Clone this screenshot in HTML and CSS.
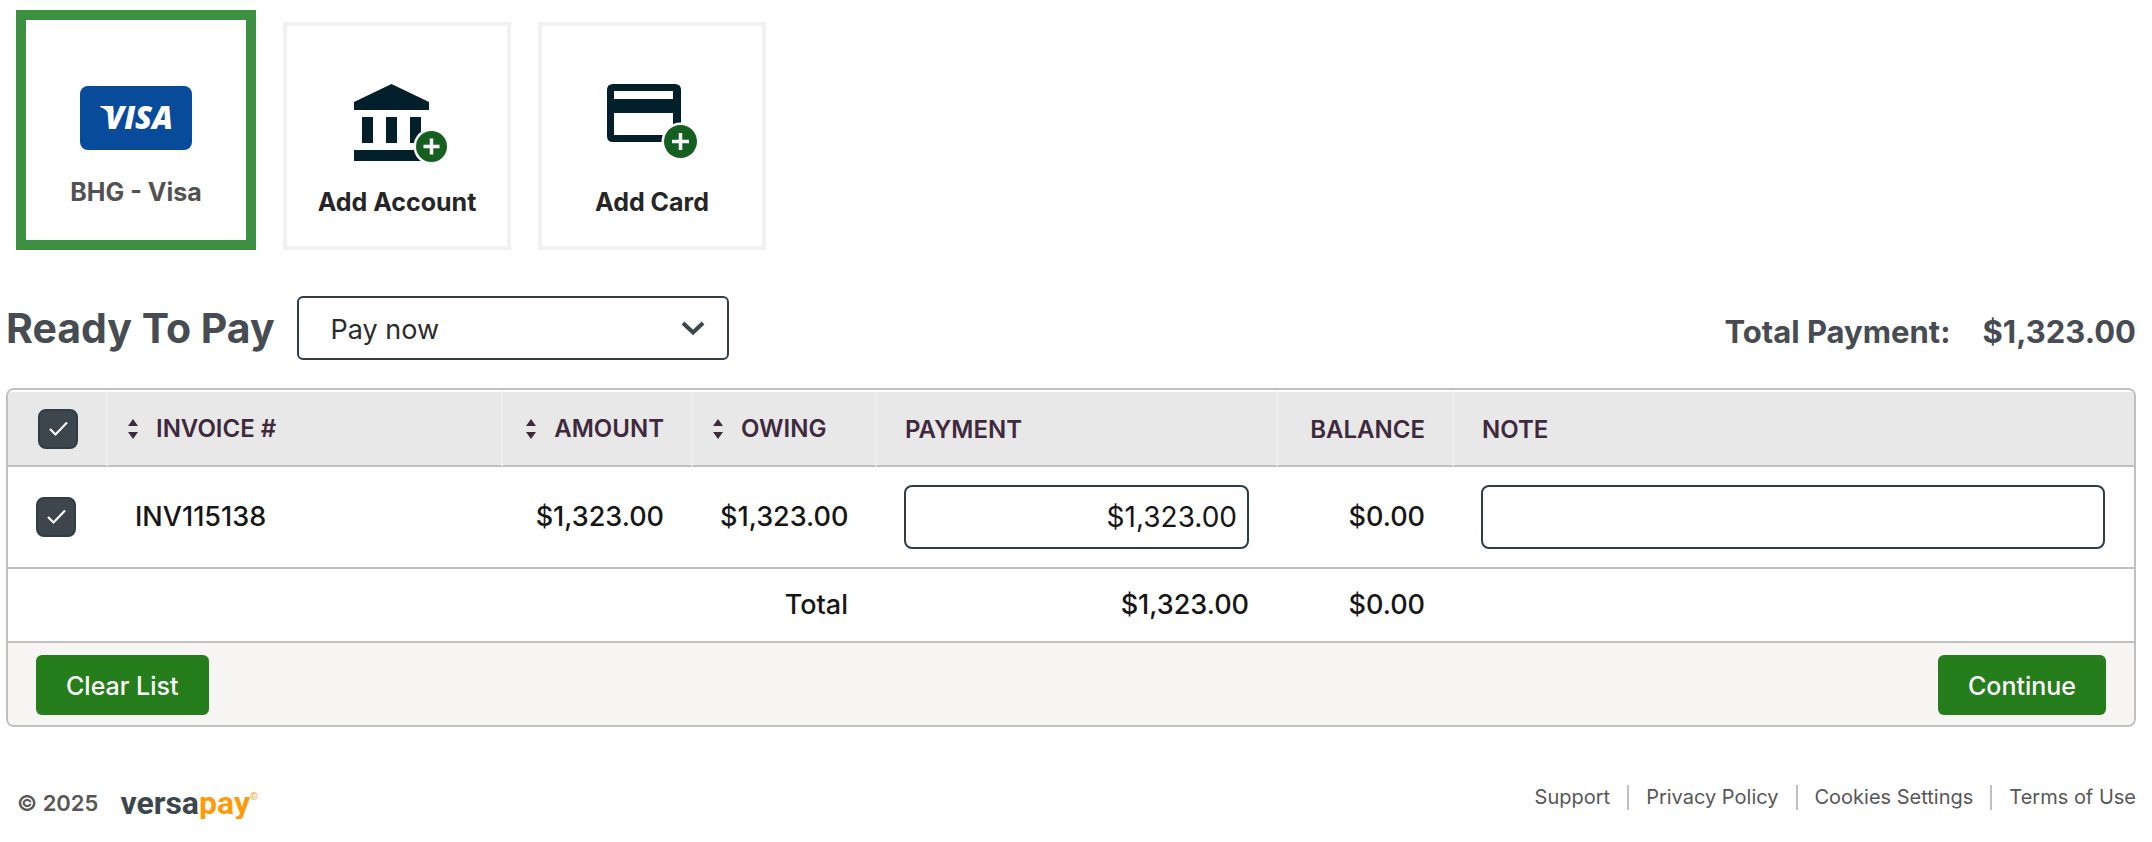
FILE: index.html
```html
<!DOCTYPE html>
<html lang="en">
<head>
<meta charset="utf-8">
<meta name="viewport" content="width=device-width, initial-scale=1">
<title>Ready To Pay</title>
<link rel="stylesheet" href="styles.css">
</head>
<body>
<main class="page">
  <section class="methods" aria-label="Payment methods">
    <button type="button" class="method method-selected">
      <span class="visa" aria-hidden="true"><svg class="visa-mark" viewBox="0 0 112 64"><text class="visa-text" x="25" y="43">VISA</text><path d="M20 20H30L34 26L29 29Q27 23 20 21Z" fill="#fff"/></svg></span>
      <span class="method-label">BHG - Visa</span>
    </button>
    <button type="button" class="method">
      <svg class="method-icon" viewBox="0 0 96 80" aria-hidden="true">
        <path fill="#02202c" d="M5 20 42.500 2 80 20V28H5ZM13 35H24V61H13ZM37 35H48V61H37ZM61 35H72V61H61ZM5 68H80V79H5Z"/>
        <circle cx="82.500" cy="64.500" r="18" fill="#fff"/><circle cx="82.500" cy="64.500" r="15.500" fill="#155f20"/>
        <path d="M74.500 64.500h16M82.500 56.500v16" stroke="#fff" stroke-width="3.500"/>
      </svg>
      <span class="method-label">Add Account</span>
    </button>
    <button type="button" class="method">
      <svg class="method-icon" viewBox="0 0 96 80" aria-hidden="true">
        <path fill="#02202c" fill-rule="evenodd" d="M9 2H71Q77 2 77 8V54Q77 60 71 60H9Q3 60 3 54V8Q3 2 9 2ZM10 9V17H69V9ZM10 31V53H69V31Z"/>
        <circle cx="76.500" cy="59.500" r="19" fill="#fff"/><circle cx="76.500" cy="59.500" r="16.500" fill="#155f20"/>
        <path d="M68 59.500h17M76.500 51v17" stroke="#fff" stroke-width="3.500"/>
      </svg>
      <span class="method-label">Add Card</span>
    </button>
  </section>

  <section class="toolbar">
    <h1 class="title"><label for="when">Ready To Pay</label></h1>
    <div class="select-wrap">
      <select id="when" class="select"><option>Pay now</option></select>
      <svg class="chevron" viewBox="0 0 24 16" aria-hidden="true"><path d="M2 3 12 12.500 22 3" fill="none" stroke="#3b474d" stroke-width="4"/></svg>
    </div>
    <p class="summary"><span>Total Payment:</span><span>$1,323.00</span></p>
  </section>

  <section class="panel">
    <table class="invoices">
      <colgroup><col class="c-check"><col class="c-invoice"><col class="c-amount"><col class="c-owing"><col class="c-payment"><col class="c-balance"><col></colgroup>
      <thead>
        <tr>
          <th class="check"><input type="checkbox" class="tick" aria-label="Select all invoices" checked></th>
          <th class="sortable"><button type="button" class="sort"><svg class="sort-icon" viewBox="0 0 10 20" aria-hidden="true"><path d="M0 7 5 0 10 7ZM0 13 5 20 10 13Z" fill="#3e2a3c"/></svg>INVOICE #</button></th>
          <th class="sortable num"><button type="button" class="sort"><svg class="sort-icon" viewBox="0 0 10 20" aria-hidden="true"><path d="M0 7 5 0 10 7ZM0 13 5 20 10 13Z" fill="#3e2a3c"/></svg>AMOUNT</button></th>
          <th class="sortable"><button type="button" class="sort"><svg class="sort-icon" viewBox="0 0 10 20" aria-hidden="true"><path d="M0 7 5 0 10 7ZM0 13 5 20 10 13Z" fill="#3e2a3c"/></svg>OWING</button></th>
          <th>PAYMENT</th>
          <th class="num">BALANCE</th>
          <th>NOTE</th>
        </tr>
      </thead>
      <tbody>
        <tr class="item">
          <td class="check"><input type="checkbox" class="tick" aria-label="Select INV115138" checked></td>
          <td>INV115138</td>
          <td class="num">$1,323.00</td>
          <td class="num">$1,323.00</td>
          <td><input type="text" class="field num" aria-label="Payment" value="$1,323.00"></td>
          <td class="num">$0.00</td>
          <td><input type="text" class="field" aria-label="Note"></td>
        </tr>
      </tbody>
      <tfoot>
        <tr class="total">
          <td colspan="4" class="num">Total</td>
          <td class="num">$1,323.00</td>
          <td class="num">$0.00</td>
          <td></td>
        </tr>
      </tfoot>
    </table>
    <div class="actions">
      <button type="button" class="btn">Clear List</button>
      <button type="button" class="btn">Continue</button>
    </div>
  </section>
</main>

<footer class="footer">
  <div class="brand">
    <span class="copyright">© 2025</span>
    <span class="logo">versa<span class="logo-pay">pay</span><sup class="logo-mark">©</sup></span>
  </div>
  <nav class="links" aria-label="Footer">
    <a href="#support">Support</a>
    <a href="#privacy">Privacy Policy</a>
    <a href="#cookies">Cookies Settings</a>
    <a href="#terms">Terms of Use</a>
  </nav>
</footer>
</body>
</html>
```
FILE: styles.css
```css
* { box-sizing: border-box; }

body {
  margin: 0;
  background: #fff;
  color: #161616;
  font-family: Inter, "Liberation Sans", sans-serif;
  font-size: 27px;
  line-height: 32px;
}

button, input, select { font: inherit; color: inherit; }
button { cursor: pointer; }

.page { padding: 10px 16px 0 6px; }

/* Payment methods */
.methods {
  display: flex;
  align-items: flex-end;
  gap: 27px;
  padding-left: 10px;
}
.method {
  display: flex;
  flex-direction: column;
  align-items: center;
  justify-content: flex-end;
  gap: 24px;
  width: 228px;
  height: 228px;
  padding: 0 0 28px;
  border: 4px solid #f1f1ef;
  background: #fff;
  color: #262626;
}
.method-selected {
  gap: 26px;
  width: 240px;
  height: 240px;
  padding-bottom: 32px;
  border: 10px solid #3d8f41;
  color: #525252;
}
.method-icon { width: 96px; height: 80px; overflow: visible; }
.method-label { font-size: 25px; font-weight: 700; line-height: 32px; }
.visa { width: 112px; height: 64px; border-radius: 8px; background: #084b9b; }
.visa-mark { display: block; width: 112px; height: 64px; }
.visa-text { fill: #fff; font-family: "Open Sans", sans-serif; font-size: 31px; font-weight: 800; font-style: italic; }

/* Heading row */
.toolbar {
  display: flex;
  align-items: center;
  gap: 22px;
  padding: 46px 0 28px;
}
.title { margin: 0; color: #474c53; font-size: 41px; font-weight: 700; line-height: 48px; }
.select-wrap { position: relative; width: 432px; }
.select {
  display: block;
  appearance: none;
  width: 100%;
  height: 64px;
  padding: 4px 60px 0 32px;
  border: 2px solid #2f3e46;
  border-radius: 6px;
  background: #fff;
  color: #2b2b2b;
}
.chevron { position: absolute; top: 24px; right: 24px; width: 24px; height: 16px; pointer-events: none; }
.summary {
  display: flex;
  gap: 32px;
  margin: 8px 0 0 auto;
  color: #474c53;
  font-size: 31px;
  font-weight: 700;
}

/* Invoice table */
.panel {
  overflow: hidden;
  border: 2px solid #c0c0c0;
  border-radius: 8px;
}
.invoices { width: 100%; table-layout: fixed; border-collapse: separate; border-spacing: 0; }
.c-check { width: 100px; }
.c-invoice { width: 395px; }
.c-amount { width: 190px; }
.c-owing { width: 184px; }
.c-payment { width: 401px; }
.c-balance { width: 176px; }
.invoices th, .invoices td { padding: 0 29px 0 27px; text-align: left; }
.invoices th {
  height: 77px;
  padding: 2px 27px 0 28px;
  border-top: 2px solid #fff;
  border-bottom: 2px solid #c0c0c0;
  border-right: 2px solid #eee;
  background: #e8e8e8;
  color: #3e2a3c;
  font-size: 24px;
  font-weight: 600;
}
.invoices th:last-child { border-right: 0; }
.invoices td { font-weight: 500; border-bottom: 2px solid #c0c0c0; }
.invoices .item td { height: 102px; }
.invoices .total td { height: 74px; }
.invoices .num { text-align: right; }
.invoices .check { padding: 0 0 0 28px; }
.invoices th.check { padding-left: 30px; }
.invoices th.sortable { padding-left: 20px; }
.sort {
  display: inline-flex;
  align-items: center;
  gap: 18px;
  padding: 0;
  border: 0;
  background: none;
}
.sort-icon { width: 10px; height: 20px; }
.tick {
  display: block;
  appearance: none;
  width: 40px;
  height: 40px;
  margin: 0;
  border: 2px solid #2f3e46;
  border-radius: 8px;
  background: #fff;
}
.tick:checked {
  background: #3d464c url("data:image/svg+xml,%3Csvg xmlns='http://www.w3.org/2000/svg' viewBox='0 0 36 36'%3E%3Cpath d='M10 18L15.500 23.500L27 11.500' fill='none' stroke='white' stroke-width='2.200'/%3E%3C/svg%3E") center / 36px 36px no-repeat;
}
.field {
  display: block;
  width: 100%;
  height: 64px;
  padding: 0 10px;
  border: 2px solid #2f3e46;
  border-radius: 8px;
  background: #fff;
  font-size: 28px;
  font-weight: 400;
}
.actions {
  display: flex;
  justify-content: space-between;
  padding: 12px 28px 10px;
  background: #f6f5f3;
}
.btn {
  height: 60px;
  padding: 2px 30px 0;
  border: 0;
  border-radius: 6px;
  background: #267d1c;
  color: #fff;
  font-size: 25px;
  font-weight: 500;
}

/* Footer */
.footer {
  display: flex;
  justify-content: space-between;
  align-items: flex-start;
  padding: 58px 16px 0 17px;
  color: #575757;
}
.brand { display: flex; align-items: center; gap: 22px; padding-top: 2px; }
.copyright { font-size: 22px; font-weight: 600; }
.logo { color: #3b474d; font-family: Roboto, sans-serif; font-size: 32px; font-weight: 700; }
.logo-pay { color: #ff9a0a; }
.logo-mark { color: #ff9a0a; font-size: 10px; line-height: 0; vertical-align: 14px; }
.links { display: flex; font-size: 20px; line-height: 25px; }
.links a { padding: 0 17px; border-left: 2px solid #c0c0c0; color: inherit; text-decoration: none; }
.links a:first-child { border-left: 0; }
.links a:last-child { padding-right: 0; }
```
